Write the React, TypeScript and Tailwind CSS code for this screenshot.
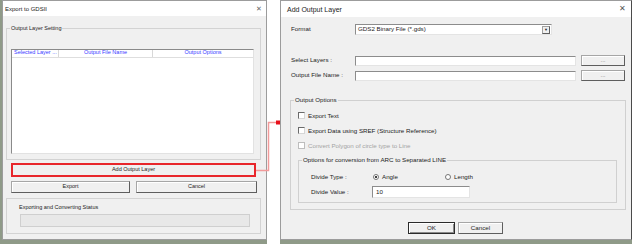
import React from "react";

const WinButton = ({
  label,
  className,
  focused,
}: {
  label: string;
  className: string;
  focused?: boolean;
}) => (
  <div
    className={`flex items-center justify-center bg-[#f0f0f0] border ${
      focused
        ? "border-[#2b2b2b] shadow-[inset_1px_1px_0_#ffffff,inset_-1px_-1px_0_#8a8a8a]"
        : "border-[#a6a6a6] border-r-[#5e5e5e] border-b-[#5e5e5e] shadow-[inset_1px_1px_0_#ffffff]"
    } ${className}`}
  >
    {label}
  </div>
);

const Field = ({ className, value }: { className: string; value?: string }) => (
  <div
    className={`bg-white border border-[#8c8c8c] border-r-[#e4e4e4] border-b-[#e4e4e4] flex items-center pl-[3px] ${className}`}
  >
    {value}
  </div>
);

const Check = ({ label, disabled }: { label: string; disabled?: boolean }) => (
  <div className="h-[15px] flex items-center pl-[7px] gap-[3px]">
    <div
      className={`w-[7px] h-[7px] bg-white border ${
        disabled ? "border-[#bdbdbd]" : "border-[#6a6a6a] border-r-[#d6d6d6] border-b-[#d6d6d6]"
      }`}
    />
    <span className={disabled ? "text-[#a3a3a3]" : ""}>{label}</span>
  </div>
);

const Radio = ({ label, checked, className }: { label: string; checked?: boolean; className: string }) => (
  <div className={`flex items-center gap-[3px] ${className}`}>
    <div className="w-[6px] h-[6px] rounded-full bg-white border border-[#777] flex items-center justify-center">
      {checked && <div className="w-[2px] h-[2px] rounded-full bg-black" />}
    </div>
    <span>{label}</span>
  </div>
);

const ExportDialog = () => (
  <div className="w-[267px] h-[244px] bg-[#8f9a88] flex flex-col">
    <div className="ml-[2px] w-[265px] h-[240px] border border-[#9c9c9c] bg-[#f0f0f0] flex flex-col text-[5.5px] leading-none text-[#1c1c1c]">
      <div className="h-[15px] bg-white flex items-center justify-between pl-[2px] pr-[4px]">
        <span className="text-[6px]">Export to GDSII</span>
        <span className="text-[7px] text-[#666]">✕</span>
      </div>

      <fieldset className="mt-[10px] ml-[3px] w-[255px] border border-[#d3d3d3] pb-[5px]">
        <legend className="ml-[3px] px-[1px]">Output Layer Setting</legend>
        <div className="mt-[17px] ml-[4px] w-[243px] h-[105px] bg-white border border-[#8a8a8a] border-r-[#e2e2e2] border-b-[#e2e2e2] flex flex-col">
          <div className="h-[8px] flex border-b border-[#dedede] text-[#3a3aff]">
            <div className="w-[47px] pl-[2px] flex items-center border-r border-[#d8d8d8]">
              Selected Layer ...
            </div>
            <div className="w-[94px] flex items-center justify-center border-r border-[#d8d8d8]">
              Output File Name
            </div>
            <div className="flex-1 flex items-center justify-center">Output Options</div>
          </div>
        </div>
      </fieldset>

      <div className="mt-[3px] ml-[8px] w-[245px] h-[14px] border-2 border-[#e8262b] p-px">
        <div className="w-full h-full bg-[#f0f0f0] flex items-center justify-center">
          Add Output Layer
        </div>
      </div>

      <div className="mt-[4px] ml-[8px] flex gap-[6px]">
        <WinButton label="Export" className="w-[119px] h-[12px]" />
        <WinButton label="Cancel" className="w-[121px] h-[12px]" />
      </div>

      <fieldset className="mt-[5px] ml-[3px] w-[255px] h-[36px] border border-[#d3d3d3] pl-[12px] pt-[6px]">
        <div>Exporting and Converting Status</div>
        <div className="mt-[4px] ml-[1px] w-[230px] h-[13px] bg-[#e8e8e8] border border-[#cfcfcf]" />
      </fieldset>
    </div>
  </div>
);

const AddLayerDialog = () => (
  <div className="ml-[13px] w-[352px] h-[244px] bg-[#8f9a88] flex flex-col">
    <div className="w-[352px] h-[240px] border border-[#9c9c9c] border-r-[#4a4a4a] bg-[#f0f0f0] flex flex-col text-[6.2px] leading-none text-[#1c1c1c]">
      <div className="h-[16px] bg-white flex items-center justify-between pl-[6px] pr-[5px]">
        <span className="text-[7px]">Add Output Layer</span>
        <span className="text-[8px] text-[#555]">✕</span>
      </div>

      <div className="pl-[9px] flex flex-col">
        <div className="mt-[7px] h-[11px] pl-[1px] flex items-center">
          <span className="w-[64px]">Format</span>
          <div className="w-[197px] h-[11px] bg-white border border-[#8c8c8c] border-r-[#e4e4e4] border-b-[#e4e4e4] flex items-center justify-between pl-[2px] pr-px">
            <span>GDS2 Binary File (*.gds)</span>
            <div className="w-[8px] h-[8px] bg-[#f0f0f0] border border-[#a0a0a0] border-r-[#5e5e5e] border-b-[#5e5e5e] flex items-center justify-center text-[4px]">
              ▼
            </div>
          </div>
        </div>

        <div className="mt-[20px] h-[11px] pl-[1px] flex items-center">
          <span className="w-[64px]">Select Layers :</span>
          <Field className="w-[221px] h-[10px]" />
          <WinButton label="..." className="ml-[5px] w-[44px] h-[11px] text-[#777]" />
        </div>
        <div className="mt-[4px] h-[11px] pl-[1px] flex items-center">
          <span className="w-[64px]">Output File Name :</span>
          <Field className="w-[221px] h-[10px]" />
          <WinButton label="..." className="ml-[5px] w-[44px] h-[11px] text-[#777]" />
        </div>

        <fieldset className="mt-[16px] w-[336px] border border-[#d0d0d0] pb-[6px]">
          <legend className="ml-[3px] px-[1px]">Output Options</legend>
          <div className="mt-[5px]">
            <Check label="Export Text" />
            <Check label="Export Data using SREF (Structure Reference)" />
            <Check label="Convert Polygon of circle type to Line" disabled />
          </div>

          <fieldset className="mt-[4px] ml-[7px] w-[319px] border border-[#d0d0d0] pb-[4px]">
            <legend className="ml-[3px] px-[1px]">Options for conversion from ARC to Separated LINE</legend>
            <div className="mt-[8px] h-[12px] pl-[12px] flex items-center">
              <span className="w-[61px]">Divide Type :</span>
              <Radio label="Angle" checked className="ml-[1px] w-[72px]" />
              <Radio label="Length" className="" />
            </div>
            <div className="mt-[3px] h-[12px] pl-[12px] flex items-center">
              <span className="w-[61px]">Divide Value :</span>
              <Field className="w-[98px] h-[12px]" value="10" />
            </div>
          </fieldset>
        </fieldset>

        <div className="mt-[12px] ml-[118px] flex gap-[3px]">
          <WinButton label="OK" focused className="w-[47px] h-[12px]" />
          <WinButton label="Cancel" className="w-[45px] h-[12px]" />
        </div>
      </div>
    </div>
  </div>
);

export default function App() {
  return (
    <div className="relative w-[632px] h-[244px] bg-white flex overflow-hidden font-['Liberation_Sans',Arial,sans-serif]">
      <ExportDialog />
      <AddLayerDialog />
      <svg className="absolute left-0 top-0 pointer-events-none" width="632" height="244">
        <path d="M256 170.5 H268.5 V122.5 H278" fill="none" stroke="#f29a9a" strokeWidth="1.5" />
        <rect x="276" y="120.5" width="4" height="4" fill="#e8101a" />
      </svg>
    </div>
  );
}
